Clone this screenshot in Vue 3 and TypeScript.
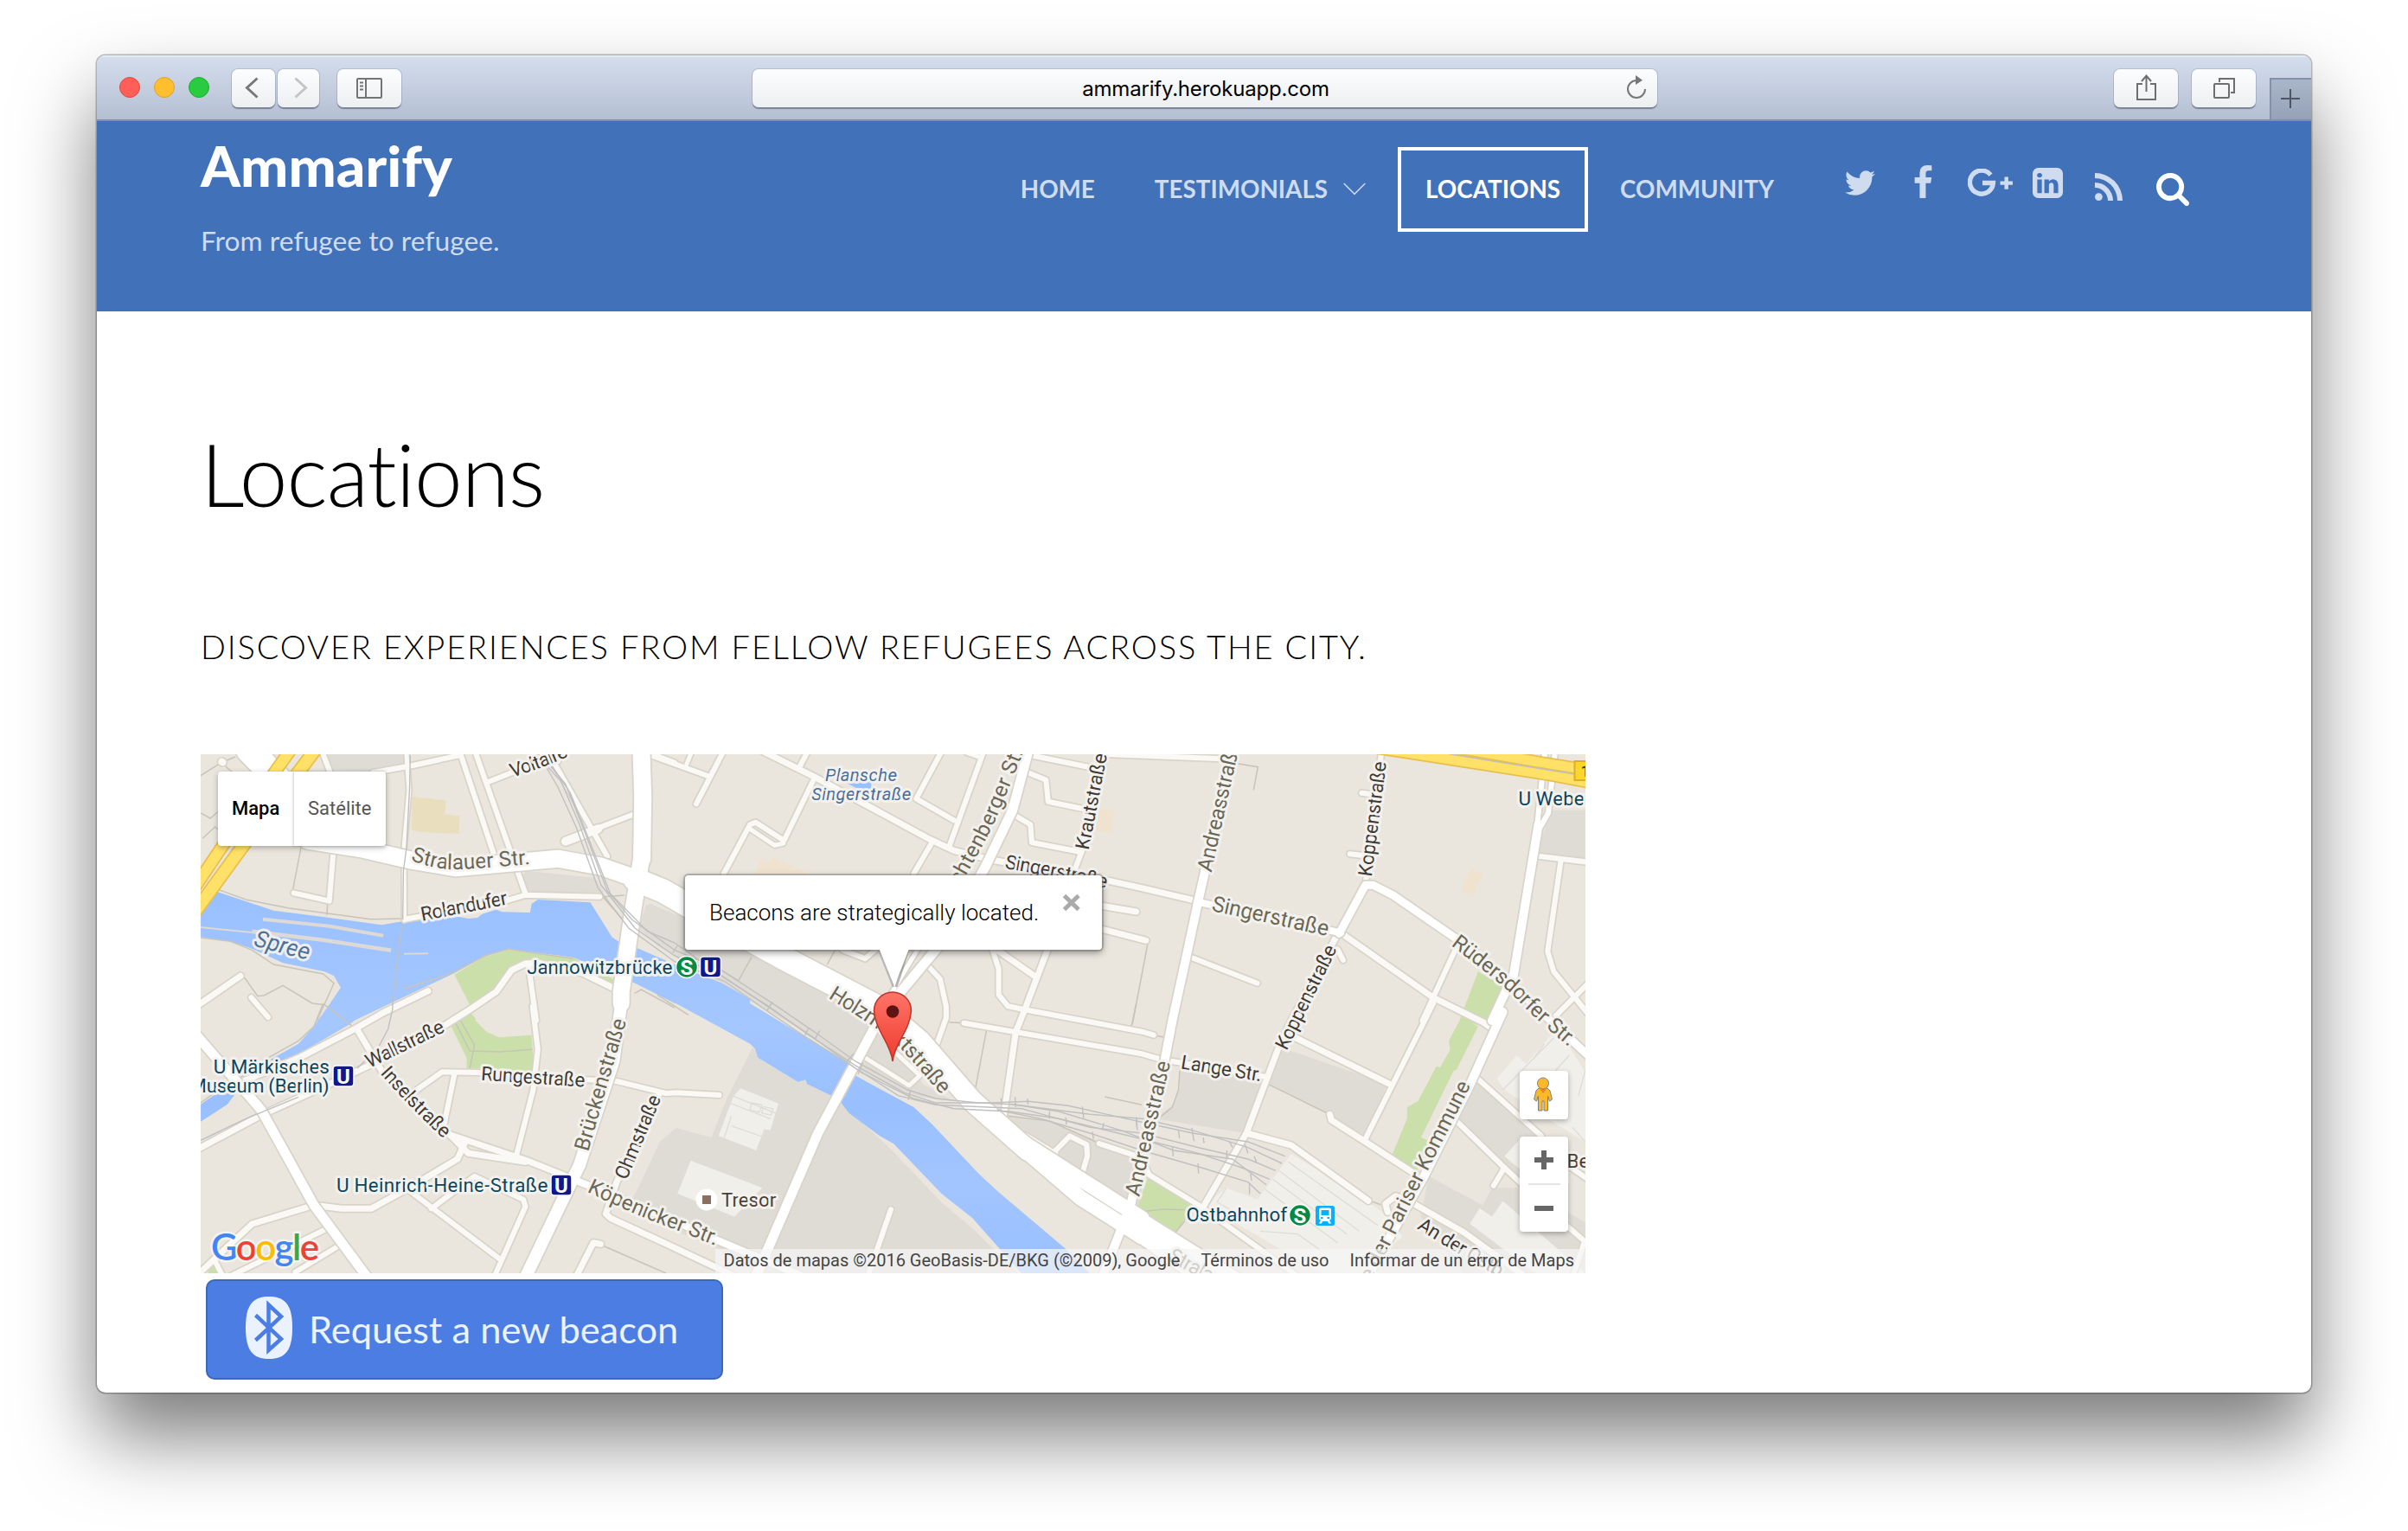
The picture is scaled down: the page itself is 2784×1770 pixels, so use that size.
<script setup lang="ts">
interface Road { w: number; d: string; kind?: 'minor' | 'major' | 'motor' }
interface Label { t: string; d: string; size: number; tone: string; free?: boolean; italic?: boolean }

// The map is described on a grid of tiles; a path may hop from one tile to another.
const tiles: Record<string, [number, number]> = {
  A: [220, 860], B: [220, 1160],
  C: [760, 860], D: [760, 1160],
  E: [1300, 860], F: [1300, 1160],
}

function points(d: string): [number, number][] {
  const out: [number, number][] = []
  let origin = tiles.A
  const tokens = d.trim().split(/\s+/)
  for (let i = 0; i < tokens.length; i++) {
    if (tiles[tokens[i]]) {
      origin = tiles[tokens[i]]
      continue
    }
    out.push([
      Math.round((origin[0] + Number(tokens[i]) / 2.8 - 232) * 10) / 10,
      Math.round((origin[1] + Number(tokens[i + 1]) / 3 - 872) * 10) / 10,
    ])
    i++
  }
  return out
}
const line = (d: string) => 'M' + points(d).map((p) => p.join(' ')).join('L')
const area = (d: string) => line(d) + 'Z'

function curve(d: string): string {
  const p = points(d)
  if (p.length < 3) return line(d)
  let s = `M${p[0].join(' ')}`
  for (let i = 1; i < p.length - 1; i++) {
    const last = i === p.length - 2
    const ex = last ? p[i + 1][0] : (p[i][0] + p[i + 1][0]) / 2
    const ey = last ? p[i + 1][1] : (p[i][1] + p[i + 1][1]) / 2
    s += `Q${p[i].join(' ')} ${ex} ${ey}`
  }
  return s
}
function span(d: string): number {
  const p = points(d)
  let n = 0
  for (let i = 1; i < p.length; i++) n += Math.hypot(p[i][0] - p[i - 1][0], p[i][1] - p[i - 1][1])
  return n - 0.5
}

const blocks = [
  'A 440 36 690 36 700 70 590 95 455 90',
  'A 1085 440 1310 465 1340 515 1090 515 1070 480',
  'A 1475 560 1490 555 1568 590 C 80 590 560 870 D 720 80 860 280 960 340 830 320 640 230 480 100 330 10 C 160 810 0 700 -60 640',
  'D 310 150 325 190 455 272 480 265 570 320 600 350 760 510 920 690 1020 780 1190 960 330 936 190 850 0 760 -100 710 -62 640 8 480 60 432 175 465 225 330',
  'D 1120 390 1270 410 1430 480 1568 540 1568 720 1530 700 1300 560',
  'F 180 210 460 280 390 450 100 400 160 350 180 290',
  'F 500 150 850 280 780 460 670 390 465 280',
  'E 1380 230 1492 230 1492 400 1335 380',
  'F 1135 250 1330 440 1330 660 1230 570 1080 410',
  'F 985 600 1160 700 1190 640 1300 640 1492 760 1492 940 1100 940 960 740',
]
const greens = [
  'A 855 800 950 740 1030 715 1240 740 1375 820 1375 860 1270 800 1080 762 1040 800 1000 860 905 905',
  'A 880 950 910 935 925 955 900 970',
  'B 840 70 905 40 960 100 1000 118 1105 110 1112 235 895 225 895 190',
  'E 1145 790 1225 840 1185 960 1165 980 1085 960 1100 915',
  'F 1090 50 1145 80 1075 230 1065 235 960 465 990 480 945 585 865 530 915 400 915 360 950 340 1010 218 1022 222 1055 160 1050 130',
  'F 75 605 235 700 165 795 40 715',
  'B 58 925 80 910 95 940 58 940',
]
const tans = [
  'A 718 182 828 196 824 244 872 250 870 312 750 306 716 300',
]
const peach = [
  'C 335 400 355 408 378 394 480 445 480 460 310 460',
  'C 1430 225 1480 232 1472 306 1418 304',
  'E 1122 432 1162 452 1125 528 1088 508',
]
const river =
  'A 34 580 85 512 270 578 430 600 620 628 690 615 870 600 900 606 930 603 945 590 990 575 1010 583 1100 585 1105 555 1125 540 1295 550 1365 670 1385 685 1455 712 1568 765 C 210 830 300 885 D 300 0 620 208 640 250 830 360 890 420 1040 590 1100 650 1320 850 1400 936 1400 950 1190 950 1020 745 920 660 765 487 720 460 620 380 595 345 560 318 485 280 480 265 455 272 325 188 315 155 300 140 60 0 B 1568 0 A 1440 830 1375 805 1240 740 1030 712 950 735 855 795 530 960 B 520 70 360 170 170 280 120 350 34 410 34 350 170 250 350 140 400 80 450 0 A 415 960 487 845 465 805 435 790 300 760 200 710 130 685 34 670'
const pond = 'C 625 112 692 130 692 160 655 160 612 135'

const buildings = [
  'D 270 295 392 347 366 440 346 436 320 510 198 460 246 322',
  'D 108 545 340 640 250 740 65 660',
  'F 540 522 690 620 860 740 900 810 760 936 640 936 260 700 330 640 430 680',
  'F 1205 260 1270 180 1300 210 1390 100 1440 150 1492 240 1492 480 1400 420 1230 300',
  'F 1150 710 1190 740 1225 685 1400 850 1492 936 1330 936 1118 764',
  'F 1230 530 1290 460 1440 560 1440 620 1330 620',
]
const outlines = [
  'D 246 322 392 385', 'D 232 345 366 400', 'D 240 390 215 470', 'D 240 425 346 465',
  'D 305 345 300 370 330 378 338 352 305 345', 'D 342 358 338 380 368 388 374 365 342 358',
  'F 500 580 760 790', 'F 480 610 720 800', 'F 455 645 690 830', 'F 530 550 820 770',
  'F 300 690 420 760', 'F 440 790 560 800 640 860', 'F 330 640 300 690',
  'F 1225 300 1390 120', 'F 1390 240 1440 180', 'F 1470 320 1492 230', 'F 1325 190 1360 140',
  'F 1450 430 1492 480',
]
const footways = [
  'A 34 110 100 65 145 45', 'A 100 65 150 110', 'A 34 240 65 258 90 235', 'A 40 328 80 288 95 300',
  'A 360 350 332 505', 'A 90 505 180 540 320 570 585 608 690 606', 'A 445 545 442 595',
  'A 175 810 218 875 240 872 300 838 395 900 435 905 B 435 5 525 80', 'A 34 672 130 685 200 715 270 765 430 798 465 830 410 960',
  'A 690 850 850 795 955 735 1030 712 1240 745', 'A 1335 530 1405 525', 'A 1335 530 1400 610 1440 670',
  'A 1438 865 1460 852 1568 915', 'B 34 345 130 270 250 190 350 130 400 80 430 0',
  'B 860 70 905 165 1000 168 1108 160', 'B 875 60 920 145 905 225', 'B 1335 840 1540 936',
  'C 575 715 550 765', 'C 305 740 262 822 200 780', 'C 0 870 100 940', 'D 1065 95 1028 305', 'D 945 65 990 68',
  'D 1550 0 1535 80', 'D 1448 324 1568 352', 'E 330 62 432 80 418 160', 'E 76 690 28 960 F 22 80', 'F 95 110 130 118',
  'F 465 280 655 380', 'F 180 220 175 300 155 360 115 395', 'F 60 722 120 714 195 716', 'F 195 755 165 795',
  'F 795 685 830 698', 'D 1130 390 1270 408 1420 480',
]
const roads: Road[] = [
  { w: 6, d: 'A 465 350 450 545 335 517' }, { w: 6, d: 'A 430 36 460 120' },
  { w: 6, d: 'A 590 100 720 75 870 40' }, { w: 5, d: 'A 700 36 708 160 692 360 693 612' },
  { w: 6, d: 'A 695 608 1020 545 1085 524 1325 530' }, { w: 6, d: 'A 875 36 985 390' },
  { w: 6, d: 'A 925 36 1085 520' }, { w: 6, d: 'A 970 130 1040 100 1190 60' },
  { w: 6, d: 'A 1180 70 1350 390' }, { w: 10, d: 'A 1215 338 1320 295' }, { w: 6, d: 'A 1300 300 1440 242' },
  { w: 8, d: 'A 102 62 105 64' }, { w: 6, d: 'A 1480 30 1568 65' },
  { w: 7, d: 'A 20 910 162 805' }, { w: 6, d: 'A 197 880 252 948' },
  { w: 7, d: 'B 20 508 235 385 420 295 600 205 830 72 900 25 A 990 860 1040 785 1085 762 1130 760 1270 795 1385 855' },
  { w: 7, d: 'B 160 275 350 190 530 90 A 620 935 770 857' },
  { w: 6, d: 'A 1095 770 1120 960 B 1108 10 1125 160 1110 300 1055 530' },
  { w: 7, d: 'B 540 90 620 235 720 350 840 455 900 520 1085 550' },
  { w: 6, d: 'B 720 310 815 238 940 240 1280 265 1380 270 1540 312 D 60 310 200 318' },
  { w: 6, d: 'B 855 245 818 440' }, { w: 7, d: 'B 840 455 1090 545 1240 610' },
  { w: 7, d: 'B 890 480 865 540 700 645 585 712 490 712 400 700 200 765 20 945' },
  { w: 6, d: 'B 710 650 1000 885' }, { w: 6, d: 'B 780 712 920 600 1078 680 1085 705 985 946' },
  { w: 6, d: 'B 78 890 105 946' }, { w: 6, d: 'B 130 946 445 780' }, { w: 6, d: 'B 340 932 490 835' },
  { w: 7, d: 'B 1520 310 1380 620 1345 730 1360 745 D 0 820 250 946' }, { w: 7, d: 'B 1328 835 1305 830 1250 946' },
  { w: 6, d: 'C -30 36 165 112' }, { w: 5, d: 'C 95 70 110 30' }, { w: 6, d: 'C 212 30 126 208' },
  { w: 7, d: 'C 340 25 510 115 880 330 960 370 1080 402 1440 470 1568 500 E 235 545' },
  { w: 6, d: 'C 485 30 460 80' }, { w: 6, d: 'C 508 120 410 335 318 272 300 280 215 450' },
  { w: 5, d: 'C 300 295 380 352 408 345' }, { w: 6, d: 'C 918 30 838 190 960 265' }, { w: 6, d: 'C 1055 30 945 355' },
  { w: 5, d: 'C 1000 30 1048 48' }, { w: 6, d: 'C 890 340 830 450' }, { w: 6, d: 'C 1210 40 1430 88' },
  { w: 6, d: 'C 1190 95 1258 125 1265 200 1400 230' }, { w: 6, d: 'C 1145 240 1208 280 1212 342 1370 375' },
  { w: 6, d: 'C 1450 40 1375 370 1350 440' }, { w: 7, d: 'C 1430 560 1550 582' }, { w: 7, d: 'C 1430 640 1582 682' },
  { w: 7, d: 'C 1100 715 1225 808' }, { w: 6, d: 'C 1085 715 1105 780 1105 870 1135 910 1190 922 D 1568 98 F 95 110' },
  { w: 7, d: 'C 1268 700 1190 920 D 1160 100 1120 400' }, { w: 6, d: 'D 992 68 1568 175 F 120 195 460 255' },
  { w: 6, d: 'C 880 775 915 815 935 910 D 935 50 905 140' }, { w: 6, d: 'C 600 715 672 745 705 715' },
  { w: 5, d: 'D 660 180 815 285 850 250 770 170' }, { w: 6, d: 'D 756 715 680 950' },
  { w: 6, d: 'D 1285 515 1335 460 1390 490 1392 530 1370 610' }, { w: 5, d: 'D 1190 455 1290 520' },
  { w: 6, d: 'D 1430 486 1568 535 F 80 595 240 700 560 946' },
  { w: 6, d: 'E 210 738 430 830' }, { w: 6, d: 'E 832 30 780 490' }, { w: 6, d: 'E -60 36 320 52' },
  { w: 7, d: 'E 690 660 540 960 F 500 150 395 450 250 715' }, { w: 7, d: 'E 700 655 1000 880 1160 965 F 1180 80' },
  { w: 6, d: 'E 1075 705 965 960 F 1000 0 780 470' }, { w: 6, d: 'E 690 712 708 750' },
  { w: 6, d: 'E 730 382 780 388' }, { w: 6, d: 'E 768 170 810 176' }, { w: 6, d: 'E 1330 388 1500 410' },
  { w: 6, d: 'E 1413 405 1370 720 1390 790 1500 935' }, { w: 6, d: 'E 1500 832 1390 950' },
  { w: 7, d: 'F 555 120 855 278' }, { w: 7, d: 'F 395 450 540 492 790 685' },
  { w: 7, d: 'F 665 385 670 405 780 480 960 605' }, { w: 6, d: 'F 1130 248 1350 460' },
  { w: 6, d: 'F 1075 408 1230 570 1320 660' }, { w: 6, d: 'F 1230 570 1195 632' },
  { w: 7, d: 'F 852 724 845 695 878 668 920 685 1100 795 1300 950' }, { w: 6, d: 'F 1420 550 1500 610' },
  { w: 6, d: 'F 1420 760 1490 825 1450 950' },
  { w: 11, kind: 'major', d: 'B 20 110 230 370 400 700 580 960' },
  { w: 8, kind: 'major', d: 'B 1235 608 1568 755 D 190 820 500 960' },
  { w: 30, kind: 'major', d: 'A 190 20 290 130' },
  { w: 20, kind: 'major', d: 'A 1460 20 1465 180 1462 400' },
  { w: 19, kind: 'major', d: 'A 1460 400 1430 600 1395 860 B 1395 0' },
  { w: 14, kind: 'major', d: 'A 1400 860 B 1370 200 1260 560 1085 950' },
  { w: 20, kind: 'major', d: 'A 380 335 560 365 720 405 860 430 1190 398 1330 425 1450 470' },
  { w: 27, kind: 'major', d: 'A 1440 470 1530 510 C 100 560 400 738 700 905' },
  { w: 24, kind: 'major', d: 'C 680 890 740 930 D 850 130 1020 340 1200 510' },
  { w: 17, kind: 'major', d: 'D 1180 480 1568 745 F 20 730 400 985' },
  { w: 17, kind: 'major', d: 'D 1180 500 1370 675 1568 810 F 60 810 260 960' },
  { w: 11, kind: 'major', d: 'C 1202 20 1150 230 1060 430 920 690 780 870' },
  { w: 5, kind: 'major', d: 'C 850 700 760 860' },
  { w: 11, kind: 'major', d: 'D 705 80 620 250 520 450 330 920 310 960' },
  { w: 10, kind: 'major', d: 'E 350 20 240 540 200 740 155 960 F 130 200 20 700 D 1440 950' },
  { w: 8, kind: 'major', d: 'E 235 548 420 590 700 655' },
  { w: 9, kind: 'major', d: 'E 695 658 780 490 805 490 870 525 1080 680 1250 830 F 1380 60 1510 190' },
  { w: 10, kind: 'major', d: 'E 1340 280 1260 800 1190 960 F 1225 30 1115 290 970 600 780 960' },
  { w: 6, kind: 'major', d: 'E 1362 20 1336 285' }, { w: 6, kind: 'major', d: 'E 1395 20 1372 240 1345 290' },
  { w: 12, kind: 'motor', d: 'A 325 20 110 345 10 505' }, { w: 13, kind: 'motor', d: 'A 405 20 170 355 10 590' },
  { w: 11, kind: 'motor', d: 'E 820 15 1370 107 1510 135' }, { w: 11, kind: 'motor', d: 'E 1080 15 1370 68 1510 92' },
]
const casing = { minor: '#d9d4c9', major: '#d9d4c9', motor: '#e8bf4c' }
const fill = { minor: '#fbf9f5', major: '#ffffff', motor: '#ffe168' }
const kinds = ['minor', 'major', 'motor'] as const
const byKind = (k: string) => roads.filter((r) => (r.kind ?? 'minor') === k)

const rails = [
  'A 1120 36 1200 130 1260 280 1330 490 1440 640 1568 735 C 200 800 360 910 D 490 110 640 215 800 310 900 345 1080 345 1200 340 1330 355 1568 412 F 220 450 400 480 520 530',
  'A 1135 36 1215 140 1275 300 1350 510 1430 610 1568 715 C 200 780 380 905 D 510 100 640 200 810 300 900 330 1040 345 1150 350 1400 385 1568 400 F 220 440 400 500 510 555',
  'A 1128 36 1190 150 1250 290 1320 500 1420 640 1568 755 C 220 825 340 915 D 470 110 620 210 780 320 900 352 1180 365 1400 430 1568 450 F 240 500 400 540 490 580',
  'A 1145 36 1230 170 1290 330 1360 520 1480 650 1568 690 C 210 805 370 920 D 500 115 660 240 830 330 960 365 1140 375 1300 400 1568 470 F 240 520 380 570 470 610',
  'D 1100 370 1240 400 1400 450 1568 510 F 250 570 400 620 440 660', 'D 1150 350 1300 375 1500 440 F 160 510 350 540 460 630',
  'A 712 40 710 150 700 360 690 440 688 610', 'A 685 630 665 800 655 910 B 655 20 640 90 605 160 540 225',
  'B 34 475 180 400 350 325',
  'E 1060 36 1225 65 1400 95 1492 108',
]
const ticks = [
  'C 65 700 50 725', 'C 372 895 355 925', 'D 525 95 510 125', 'D 490 85 478 112', 'D 635 175 610 205', 'D 665 205 650 245',
  'D 820 300 812 335', 'D 1112 330 1116 350', 'D 1158 325 1160 360', 'D 1198 330 1200 350', 'D 1375 358 1380 398',
  'D 1270 375 1268 400', 'D 1322 395 1324 420', 'D 1445 415 1440 440', 'D 1408 445 1412 470', 'D 1550 395 1552 430',
  'F 38 395 42 440', 'F 175 440 178 468', 'F 218 432 225 478', 'F 255 465 258 485', 'F 155 495 158 530', 'F 238 555 240 590',
  'F 340 480 350 500', 'F 390 490 400 520', 'F 420 530 428 552', 'F 405 625 405 662', 'F 332 510 330 535', 'F 408 590 412 615',
]
const jetties = [
  { w: 4, d: 'A 235 608 450 632 625 665' }, { w: 4.5, d: 'A 200 650 430 680 650 716' },
  { w: 2, d: 'A 34 636 220 656' }, { w: 2, d: 'A 692 728 770 727' },
]

const labels: Label[] = [
  { t: 'Voltaire', d: 'A 1042 116 1150 80 1225 42', size: 22, tone: '#3f3a35' },
  { t: 'Stralauer Str.', d: 'A 712 404 790 432 880 438 1102 417', size: 24.5, tone: '#6b6757' },
  { t: 'Rolandufer', d: 'A 750 614 1030 556', size: 22.5, tone: '#3f3a35' },
  { t: 'Spree', d: 'A 203 700 382 750', size: 27, tone: '#4d7199', italic: true },
  { t: 'Jannowitzbrücke', d: 'A 1090 797 1562 797', size: 22.5, tone: '#0b4560' },
  { t: 'U Märkisches', d: 'B 75 242 452 242', size: 22.5, tone: '#0b4560' },
  { t: 'Museum (Berlin)', d: 'B -2 308 451 308', size: 22.5, tone: '#0b4560' },
  { t: 'Wallstraße', d: 'B 580 225 828 96', size: 22.5, tone: '#3f3a35' },
  { t: 'Inselstraße', d: 'B 614 243 718 368 820 470', size: 22.5, tone: '#3f3a35' },
  { t: 'Rungestraße', d: 'B 940 266 1278 290', size: 22.5, tone: '#3f3a35' },
  { t: 'Brückenstraße', d: 'B 1288 516 1350 280 1412 60', size: 24.5, tone: '#6b6757' },
  { t: 'Ohmstraße', d: 'B 1412 615 1525 328', size: 22.5, tone: '#3f3a35' },
  { t: 'U Heinrich-Heine-Straße', d: 'B 473 653 1159 653', size: 22.5, tone: '#0b4560' },
  { t: 'Köpenicker Str.', d: 'B 1282 653 1430 728 1568 783 D 190 841', size: 24.5, tone: '#6b6757' },
  { t: 'Tresor', d: 'D 207 705 386 705', size: 22.5, tone: '#4a3f38' },
  { t: 'Plansche', d: 'C 543 130 777 130', size: 20.5, tone: '#4a6c9a', italic: true },
  { t: 'Singerstraße', d: 'C 499 195 823 195', size: 20.5, tone: '#4a6c9a', italic: true },
  { t: 'Lichtenberger Str', d: 'C 950 545 1060 350 1140 150 1188 20', size: 24.5, tone: '#6b6757' },
  { t: 'Krautstraße', d: 'C 1396 370 1456 36', size: 22.5, tone: '#3f3a35' },
  { t: 'Singerstraße', d: 'C 1124 431 1280 459 1454 501', size: 22.5, tone: '#3f3a35' },
  { t: 'Holzmarktstraße', d: 'C 552 880 D 724 94 804 170 920 318', size: 24.5, tone: '#6b6757' },
  { t: 'Andreasstraße', d: 'E 281 447 374 -2', size: 24.5, tone: '#6b6757' },
  { t: 'Koppenstraße', d: 'E 800 462 848 63', size: 22.5, tone: '#3f3a35' },
  { t: 'Koppenstraße', d: 'F 525 166 E 689 710', size: 22.5, tone: '#3f3a35' },
  { t: 'Singerstraße', d: 'E 280 578 658 667', size: 25, tone: '#6b6757' },
  { t: 'Rüdersdorfer Str.', d: 'E 1056 698 1230 838 F 1320 44 1440 152', size: 24.5, tone: '#6b6757' },
  { t: 'U Weberwiese', d: 'E 1275 212 1850 212', size: 22.5, tone: '#0b4560', free: true },
  { t: 'Lange Str.', d: 'F 181 226 443 271', size: 22.5, tone: '#3f3a35' },
  { t: 'Andreasstraße', d: 'F 48 672 149 204', size: 24.5, tone: '#6b6757' },
  { t: 'Straße der Pariser Kommune', d: 'F 725 1124 1122 283', size: 24.5, tone: '#6b6757' },
  { t: 'An der Ostb', d: 'F 946 780 1070 863 1214 950', size: 22.5, tone: '#3f3a35' },
  { t: 'Stralauer Platz', d: 'F 138 890 480 1090', size: 24, tone: '#6b6757' },
  { t: 'Ostbahnhof', d: 'F 200 756 528 756', size: 22.5, tone: '#0b4560' },
  { t: 'Be', d: 'F 1432 570 1560 570', size: 22.5, tone: '#4a3f38', free: true },
]

const tabs = [
  { name: 'HOME' }, { name: 'TESTIMONIALS', menu: true }, { name: 'LOCATIONS', active: true }, { name: 'COMMUNITY' },
]
</script>

<template>
  <div class="desk">
    <div class="window">
      <div class="toolbar">
        <div class="lights"><i class="red" /><i class="amber" /><i class="green" /></div>
        <div class="btn back"><svg width="50" height="44"><path d="M29.500 10.500 17.500 21.500 29.500 32.500" fill="none" stroke="#777" stroke-width="3" /></svg></div>
        <div class="btn fwd"><svg width="50" height="44"><path d="M20.500 10.500 32.500 21.500 20.500 32.500" fill="none" stroke="#c4c4c4" stroke-width="3" /></svg></div>
        <div class="btn side">
          <svg width="74" height="44" fill="none" stroke="#747474" stroke-width="2"><rect x="23" y="11" width="28" height="22" rx="1" /><path d="M33 11V33M26 15.500H30M26 19.500H30M26 23.500H30" /></svg>
        </div>
        <div class="address">
          <span>ammarify.herokuapp.com</span>
          <svg width="26" height="30" viewBox="0 0 26 30"><path d="M13 6A10 10 0 1 0 23 16" fill="none" stroke="#777" stroke-width="2" /><path d="M12 0V11L20 5.800Z" fill="#777" /></svg>
        </div>
        <div class="btn share">
          <svg width="74" height="44" fill="none" stroke="#6e6e6e" stroke-width="2"><path d="M33 17H27V35H48V17H42M37.500 26V8M32 14 37.500 7.500 43 14" /></svg>
        </div>
        <div class="btn pages">
          <svg width="74" height="44" fill="none" stroke="#6e6e6e" stroke-width="2"><rect x="26" y="17" width="17" height="16" rx="1" /><path d="M32 15V11H49V27H45" /></svg>
        </div>
        <div class="plus"><svg width="22" height="22"><path d="M11 0V22M0 11H22" stroke="#4d5666" stroke-width="2" /></svg></div>
      </div>

      <header class="site">
        <div class="brand">
          <h1>Ammarify</h1>
          <p>From refugee to refugee.</p>
        </div>
        <nav>
          <a v-for="t in tabs" :key="t.name" :class="{ active: t.active }">{{ t.name }}<svg v-if="t.menu" width="26" height="15"><path d="M.7 1 13 13.300 25.300 1" fill="none" stroke="#c9d8ee" stroke-width="1.600" /></svg></a>
        </nav>
        <div class="social">
          <svg class="tw" viewBox="108 256 1576 1280" width="35" height="29"><path d="M1684 408q-67 98-162 167 1 14 1 42 0 130-38 259.500t-115.500 248.500-184.500 210.500-258 146-323 54.500q-271 0-496-145 35 4 78 4 225 0 401-138-105-2-188-64.500t-114-159.500q33 5 61 5 43 0 85-11-112-23-185.500-111.500t-73.500-205.500v-4q68 38 146 41-66-44-105-115t-39-154q0-88 44-163 121 149 294.500 238.500t371.500 99.500q-8-38-8-74 0-134 94.500-228.500t228.500-94.500q140 0 236 102 109-21 205-78-37 115-142 178 93-10 186-50z" /></svg>
          <svg class="fb" viewBox="479 0 864 1664" width="21" height="38"><path d="M1343 12v264h-157q-86 0-116 36t-30 108v189h293l-39 296h-254v759h-306v-759h-255v-296h255v-218q0-186 104-288.500t277-102.500q147 0 228 12z" /></svg>
          <svg class="gp" viewBox="0 0 52 33" width="52" height="33"><path d="M26.500 7.200A13.500 13.500 0 1 0 29.400 16.500H17" fill="none" stroke="#cfdcf0" stroke-width="5.400" /><path d="M42.500 9.500h4.400v5H52v4.300h-5.100v5h-4.400v-5h-5v-4.300h5z" /></svg>
          <svg class="in" viewBox="128 128 1536 1536" width="35" height="35"><path d="M365 1414h231v-694h-231v694zm246-908q-1-52-36-86t-93-34-94.500 34-36.500 86q0 51 35.500 85.500t92.500 34.500h1q59 0 95-34.500t36-85.500zm585 908h231v-398q0-154-73-233t-193-79q-136 0-209 117h2v-101h-231q3 66 0 694h231v-388q0-38 7-56 15-35 45-59.500t74-24.500q116 0 116 157v371zm468-998v960q0 119-84.500 203.500t-203.500 84.500h-960q-119 0-203.500-84.500t-84.500-203.500v-960q0-119 84.500-203.500t203.500-84.500h960q119 0 203.500 84.500t84.500 203.500z" /></svg>
          <svg class="rss" viewBox="0 0 32 32" width="32" height="32"><circle cx="4.400" cy="27.600" r="4.400" /><path d="M0 11A21 21 0 0 1 21 32H15A15 15 0 0 0 0 17ZM0 0A32 32 0 0 1 32 32H26A26 26 0 0 0 0 6Z" /></svg>
          <svg class="find" viewBox="64 128 1664 1664" width="38" height="38"><path fill="#fff" d="M1216 832q0-185-131.500-316.500t-316.500-131.500-316.500 131.500-131.500 316.500 131.500 316.500 316.500 131.500 316.500-131.500 131.500-316.500zm512 832q0 52-38 90t-90 38q-54 0-90-38l-343-342q-179 124-399 124-143 0-273.500-55.500t-225-150-150-225-55.500-273.500 55.500-273.500 150-225 225-150 273.500-55.500 273.500 55.500 225 150 150 225 55.500 273.500q0 220-124 399l343 343q37 37 37 90z" /></svg>
        </div>
      </header>

      <main>
        <h2>Locations</h2>
        <h3>DISCOVER EXPERIENCES FROM FELLOW REFUGEES ACROSS THE CITY.</h3>

        <div class="map">
          <svg class="canvas" width="1601" height="600" viewBox="0 0 1601 600">
            <defs>
              <linearGradient id="pin" x1="0" y1="0" x2="0" y2="1"><stop offset="0" stop-color="#ff7468" /><stop offset="1" stop-color="#f03a2e" /></linearGradient>
              <linearGradient id="water" x1="0" y1="0" x2="0" y2="1"><stop offset="0" stop-color="#99c0ff" /><stop offset=".35" stop-color="#a5c7ff" /><stop offset=".55" stop-color="#98bfff" /><stop offset=".75" stop-color="#a3c5ff" /><stop offset="1" stop-color="#98bfff" /></linearGradient>
              <path v-for="(l, i) in labels" :id="'lbl' + i" :key="i" :d="curve(l.d)" />
            </defs>
            <rect width="1601" height="600" fill="#eae6de" />
            <path v-for="d in blocks" :key="d" :d="area(d)" fill="#dfdbd5" />
            <path v-for="d in greens" :key="d" :d="area(d)" fill="#cadfaa" />
            <path v-for="d in tans" :key="d" :d="area(d)" fill="#e9dfbf" />
            <path v-for="d in peach" :key="d" :d="area(d)" fill="#efe3d0" />
            <path :d="area(river)" fill="url(#water)" />
            <path :d="area(pond)" fill="#99c0ff" />
            <path v-for="j in jetties" :key="j.d" :d="line(j.d)" fill="none" stroke="#dcd9d6" :stroke-width="j.w" />
            <path v-for="d in buildings" :key="d" :d="area(d)" fill="#f0efea" />
            <path v-for="d in outlines" :key="d" :d="line(d)" fill="none" stroke="#dedcd6" stroke-width="1.300" />
            <path v-for="d in footways" :key="d" :d="line(d)" fill="none" stroke="#c9c4b8" stroke-width="1.500" />
            <g v-for="k in kinds" :key="k" fill="none" stroke-linejoin="round" stroke-linecap="round">
              <path v-for="r in byKind(k)" :key="r.d" :d="line(r.d)" :stroke="casing[k]" :stroke-width="r.w + 3.500" />
              <path v-for="r in byKind(k)" :key="r.d + 'f'" :d="line(r.d)" :stroke="fill[k]" :stroke-width="r.w" />
            </g>
            <g fill="none" stroke="#c0c0c0" stroke-width="1.400">
              <path v-for="d in rails" :key="d" :d="line(d)" />
              <path v-for="d in ticks" :key="d" :d="line(d)" />
            </g>

            <g class="names">
              <text v-for="(l, i) in labels" :key="i" :font-size="l.size" :fill="l.tone" :font-style="l.italic ? 'italic' : 'normal'" :textLength="l.free ? undefined : span(l.d)"><textPath :href="'#lbl' + i">{{ l.t }}</textPath></text>
            </g>

            <g class="sign">
              <g v-for="p in [[153, 360], [405, 486], [577.500, 234]]" :key="p[0]" :transform="`translate(${p[0]} ${p[1]})`">
                <rect width="24" height="24" rx="4" fill="#10188c" stroke="#fff" stroke-width="1.500" />
                <text x="12" y="20.500" font-size="24">U</text>
              </g>
              <g v-for="p in [[562, 246], [1271, 533]]" :key="p[0]" :transform="`translate(${p[0]} ${p[1]})`">
                <circle r="12.500" fill="#088a42" stroke="#fff" stroke-width="1.500" />
                <text y="8.500" font-size="24">S</text>
              </g>
              <g transform="translate(1289 522)">
                <rect width="22" height="23" rx="2.500" fill="#0badff" />
                <path d="M6 2.500h10a2 2 0 0 1 2 2v10a2 2 0 0 1-2 2l2 4h-3l-1-2.500h-6L7 20.500H4l2-4a2 2 0 0 1-2-2v-10a2 2 0 0 1 2-2zM6.500 5v6h9V5z" fill="#fff" fill-rule="evenodd" />
                <path d="M6 13h2.500v2H6zM13.500 13H16v2h-2.500z" fill="#0badff" />
              </g>
              <rect x="1588.500" y="8" width="30" height="22" fill="#fbd72c" stroke="#dcae2c" stroke-width="2" />
              <text class="route" x="1601" y="25.500" font-size="19">1</text>
            </g>
            <circle cx="585" cy="515" r="12.500" fill="#fff" /><rect x="580" y="510" width="10" height="10" fill="#8d6e63" />

            <path d="M800 355C798 334 780 320 778.500 296.500A21.500 21.500 0 1 1 821.500 296.500C820 320 802 334 800 355Z" fill="url(#pin)" stroke="#b8352c" stroke-width="1.500" />
            <circle cx="800" cy="297.500" r="7.300" fill="#5d1410" />

            <text class="google" x="12" y="585" textLength="125"><tspan fill="#4285f4">G</tspan><tspan fill="#ea4335">o</tspan><tspan fill="#fbbc05">o</tspan><tspan fill="#4285f4">g</tspan><tspan fill="#34a853">l</tspan><tspan fill="#ea4335">e</tspan></text>
          </svg>

          <div class="types"><b>Mapa</b><span>Satélite</span></div>
          <div class="bubble">
            <span>Beacons are strategically located.</span>
            <svg class="close" width="22" height="21"><path d="M2.500 2.500 19 18.500M19 2.500 2.500 18.500" stroke="#aaa" stroke-width="5" /></svg>
            <svg class="tail" width="50" height="48"><path d="M38 1 24 44" stroke="#777" stroke-width="3" opacity=".55" /><path d="M4 1 21 44" stroke="#999" stroke-width="2.500" opacity=".6" /><path d="M4.500 0 22 43 39 0Z" fill="#fff" /></svg>
          </div>
          <div class="peg">
            <svg width="24" height="40" viewBox="0 0 24 40" fill="#fbb829" stroke="#7a7f86" stroke-width="1"><path d="M7 13H17L20 16 22.500 26 19.500 28 17.500 22V39H13V28H11V39H6.500V22L4.500 28 1.500 26 4 16Z" /><circle cx="12" cy="7.500" r="6.500" /><path d="M8 13.500H16L12 19Z" fill="#e8861c" stroke="none" /></svg>
          </div>
          <div class="zoom">
            <svg width="22" height="22"><path d="M11 0V22M0 11H22" stroke="#666" stroke-width="6" /></svg>
            <i />
            <svg width="22" height="22"><path d="M0 11H22" stroke="#666" stroke-width="6" /></svg>
          </div>
          <div class="legal"><span class="l1">Datos de mapas ©2016 GeoBasis-DE/BKG (©2009), Google</span><span class="l2">Términos de uso</span><span class="l3">Informar de un error de Maps</span></div>
        </div>

        <button class="request">
          <svg width="54" height="72" viewBox="0 0 54 72"><path d="M27 0C46 0 54 10 54 36S46 72 27 72 0 62 0 36 8 0 27 0Z" fill="#ebf2ff" /><path d="M11.500 21.500 41 49 26.500 62V9.500L41 23 11.500 50.500" fill="none" stroke="#4c7de2" stroke-width="4.500" /></svg>
          <span>Request a new beacon</span>
        </button>
      </main>
    </div>
  </div>
</template>

<style>
body { margin: 0; background: #fff; }
</style>

<style scoped>
.desk { width: 2784px; height: 1770px; box-sizing: border-box; padding: 64px 112px 0; overflow: hidden; font-family: Lato, sans-serif; background: #fff; }
.window { width: 2560px; height: 1546px; border-radius: 10px; overflow: hidden; background: #fff; box-shadow: 0 0 0 1.500px rgba(0, 0, 0, .25), 0 50px 90px rgba(0, 0, 0, .52); }
svg { display: block; flex: none; }

.toolbar { height: 76px; box-sizing: border-box; display: flex; align-items: flex-start; padding-top: 16px; background: linear-gradient(#d5deed, #b4bfd2); border-bottom: 2px solid #808ea6; box-shadow: inset 0 2px #e4eaf4; }
.lights { display: flex; gap: 16px; padding: 9px 0 0 26px; }
.lights i { box-sizing: border-box; width: 24px; height: 24px; border-radius: 50%; border-width: 1px; border-style: solid; }
.red { background: #ff5f57; border-color: #e2463f; }
.amber { background: #ffbf2f; border-color: #e0a02a; }
.green { background: #29cc41; border-color: #1bac2c; }
.btn, .address { height: 44px; border-radius: 7px; background: linear-gradient(#fcfdfe, #eeeff1); box-shadow: 0 0 0 1px rgba(130, 145, 170, .35), 0 1.500px 1px rgba(90, 100, 120, .7); }
.back { width: 50px; margin-left: 26px; }
.fwd { width: 48px; margin-left: 3px; }
.side { width: 74px; margin-left: 21px; }
.address { width: 1046px; margin-left: 406px; position: relative; display: flex; align-items: center; justify-content: center; font: 400 24px/44px Inter, sans-serif; letter-spacing: -.2px; color: #000; }
.address span { padding: 2px 0 0 2px; }
.address svg { position: absolute; right: 11px; top: 7px; }
.share { width: 74px; margin-left: 528px; }
.pages { width: 74px; margin-left: 16px; }
.plus { box-sizing: border-box; width: 48px; height: 48px; margin: 10px 0 0 16px; padding: 11px 0 0 11px; background: linear-gradient(#a9b5c8, #95a2b8); border: solid #8391a8; border-width: 2px 0 0 2px; }

.site { height: 220px; box-sizing: border-box; display: flex; align-items: flex-start; padding: 0 141px 0 120px; background: #4171b8; }
.brand { padding-top: 12px; flex: 1; }
h1 { margin: 0; font: 900 65.500px/77px Lato, sans-serif; letter-spacing: .1px; color: #fff; }
.brand p { margin: 30px 0 0; font-size: 31.800px; line-height: 38px; color: #cfdcf0; }
nav { display: flex; gap: 5px; padding-top: 30px; margin-right: 50px; }
nav a { height: 90px; display: flex; align-items: center; padding: 0 28px; border: 4px solid transparent; color: #cfdcf0; font: 700 27.800px/90px Lato, sans-serif; }
nav a svg { margin-left: 18px; margin-top: -2px; }
nav .active { border-color: #fff; color: #fff; }
.social { display: flex; fill: #cfdcf0; }
.tw { margin-top: 57px; }
.fb { margin: 51px 0 0 45px; }
.gp { margin: 55px 0 0 41px; }
.in { margin: 54px 0 0 23px; }
.rss { margin: 60px 0 0 37px; }
.find { margin: 60px 0 0 39px; }

main { padding: 127px 0 0 120px; }
h2 { margin: 0; font: 300 100px/120px Lato, sans-serif; font-variant-ligatures: none; letter-spacing: -1px; color: #000; }
h3 { margin: 117px 0 0; font: 300 38px/46px Lato, sans-serif; letter-spacing: 1.860px; color: #000; white-space: nowrap; }
.map { position: relative; width: 1601px; height: 600px; margin-top: 102px; overflow: hidden; font-family: Roboto, sans-serif; }
.names text { font-family: Roboto, sans-serif; paint-order: stroke; stroke: rgba(245, 243, 239, .92); stroke-width: 6px; stroke-linejoin: round; }
.sign text { font-family: Roboto, sans-serif; font-weight: 700; fill: #fff; text-anchor: middle; }
.sign .route { font-weight: 500; fill: #244a1e; }
.google { font: 600 42px Lato, sans-serif; paint-order: stroke; stroke: rgba(255, 255, 255, .55); stroke-width: 5px; }
.types { position: absolute; left: 20px; top: 20px; display: flex; height: 86px; border-radius: 4px; background: #fff; box-shadow: 0 2px 6px rgba(0, 0, 0, .3); font-size: 22px; line-height: 86px; }
.types b { width: 72px; padding-left: 16px; font-weight: 500; color: #000; }
.types span { width: 90px; padding-left: 16px; color: #565656; box-shadow: -1px 0 3px rgba(0, 0, 0, .2); }
.bubble { position: absolute; left: 560px; top: 140px; width: 482px; height: 86px; border-radius: 4px; background: #fff; box-shadow: 0 0 0 2px rgba(120, 120, 120, .45), 0 3px 9px rgba(0, 0, 0, .45); font-weight: 300; font-size: 26px; line-height: 86px; color: #000; }
.bubble span { padding-left: 28px; white-space: nowrap; }
.close { position: absolute; right: 24px; top: 21px; }
.tail { position: absolute; left: 220px; top: 85px; }
.peg { position: absolute; right: 20px; top: 366px; width: 56px; height: 56px; border-radius: 4px; background: #fff; box-shadow: 0 2px 6px rgba(0, 0, 0, .3); display: flex; align-items: center; justify-content: center; }
.peg svg { margin-left: -2px; margin-top: -3px; }
.zoom { position: absolute; right: 20px; top: 442px; width: 56px; height: 110px; border-radius: 4px; background: #fff; box-shadow: 0 2px 6px rgba(0, 0, 0, .3); display: flex; flex-direction: column; align-items: center; justify-content: space-evenly; }
.zoom i { width: 37px; height: 2px; background: #e4e4e4; }
.legal { position: absolute; right: 0; bottom: 0; height: 28px; display: flex; background: rgba(245, 245, 245, .72); font-size: 20px; line-height: 27px; color: #444; white-space: nowrap; }
.legal span { padding: 0 14px 0 10px; }
.legal .l3 { padding-right: 13px; }
.request { display: flex; align-items: center; width: 598px; height: 116px; box-sizing: border-box; margin: 7px 0 0 6px; padding: 0 0 0 44px; border: 2px solid #3d67b8; border-radius: 10px; background: #4c7de2; color: #ebf2ff; font: 400 43.400px/54px Lato, sans-serif; white-space: nowrap; }
.request svg { margin-top: -4px; }
.request span { margin: -2px 0 0 19px; }
</style>
